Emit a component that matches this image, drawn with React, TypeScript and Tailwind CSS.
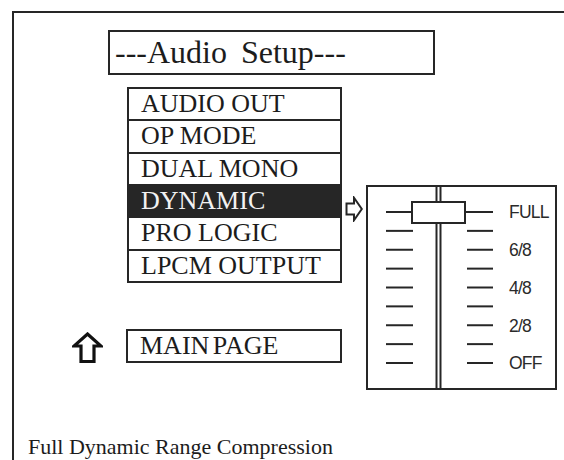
import React from 'react';

const MENU_ITEMS = ['AUDIO OUT', 'OP MODE', 'DUAL MONO', 'DYNAMIC', 'PRO LOGIC', 'LPCM OUTPUT'];
const SELECTED = 'DYNAMIC';
const LEVELS = ['FULL', '6/8', '4/8', '2/8', 'OFF'];

const serif = "font-['Liberation_Serif','Times_New_Roman',serif]";
const ink = '#262626';

function SliderDrawing() {
  const ticks = Array.from({ length: 9 }, (_, i) => 25 + i * 18.875);
  return (
    <svg width="140" height="201" viewBox="0 0 140 201" className="shrink-0">
      {ticks.map((y, i) => (
        <g key={i} stroke={ink} strokeWidth="2">
          <line x1="18" y1={y} x2={i === 0 ? 60 : 45} y2={y} />
          <line x1={i === 0 ? 80 : 99} y1={y} x2="125" y2={y} />
        </g>
      ))}
      <line x1="68.5" y1="0" x2="68.5" y2="201" stroke={ink} strokeWidth="2" />
      <line x1="72.5" y1="0" x2="72.5" y2="201" stroke={ink} strokeWidth="2" />
      <rect x="44" y="15" width="53" height="21" fill="white" stroke={ink} strokeWidth="2" />
    </svg>
  );
}

function RightArrow() {
  return (
    <svg width="18" height="26" viewBox="0 0 18 26">
      <path d="M1.5 7.5 H9 V1.8 L16.8 13 L9 24.2 V18.5 H1.5 Z" fill="white" stroke={ink} strokeWidth="2" strokeLinejoin="miter" />
    </svg>
  );
}

function UpArrow() {
  return (
    <svg width="31" height="31" viewBox="0 0 31 31">
      <path d="M15.5 2 L29 14 H22 V29.5 H9 V14 H2 Z" fill="white" stroke="#111" strokeWidth="3.2" strokeLinejoin="miter" />
    </svg>
  );
}

export default function App() {
  return (
    <div className="h-[460px] w-[564px] overflow-hidden bg-white">
      <div className={`ml-[12px] mt-[11px] h-[449px] border-l-2 border-t-2 border-[#262626] text-[#1c1c1c] ${serif}`}>
        <div className="ml-[94px] mt-[17px] h-[45px] w-[327px] border-2 border-[#262626] pl-[5px] text-[32px] leading-[41px] [word-spacing:6px]">
          ---Audio Setup---
        </div>

        <div className="mt-[12px] flex">
          <div className="ml-[58px] flex flex-col">
            <div className="ml-[55px] w-[215px] border-2 border-[#262626]">
              {MENU_ITEMS.map((item, i) => (
                <div
                  key={item}
                  className={[
                    'pl-[12px] text-[26px] leading-[30.33px] whitespace-nowrap',
                    i > 0 ? 'border-t-2 border-[#262626]' : '',
                    item === SELECTED ? 'bg-[#262626] text-[#f2f2f2]' : '',
                  ].join(' ')}
                >
                  {item}
                </div>
              ))}
            </div>
            <div className="mt-[46px] flex items-end gap-[23px]">
              <UpArrow />
              <div className="h-[34px] w-[216px] border-2 border-[#262626] pl-[12px] text-[26px] leading-[30px] [word-spacing:-3px]">
                MAIN PAGE
              </div>
            </div>
          </div>

          <div className="ml-[3px] mt-[109px]">
            <RightArrow />
          </div>

          <div className="ml-[3px] mt-[98px] flex h-[205px] w-[191px] border-2 border-[#262626]">
            <SliderDrawing />
            <div className="flex flex-col pt-[6.5px] font-['Liberation_Sans','Arial',sans-serif] text-[17.5px] tracking-[-0.8px] text-[#2a2a2a]">
              {LEVELS.map((level) => (
                <div key={level} className="flex h-[37.8px] items-center pl-[1px]">
                  {level}
                </div>
              ))}
            </div>
          </div>
        </div>

        <div className="ml-[14px] mt-[44px] text-[22px] leading-[26px]">Full Dynamic Range Compression</div>
      </div>
    </div>
  );
}
